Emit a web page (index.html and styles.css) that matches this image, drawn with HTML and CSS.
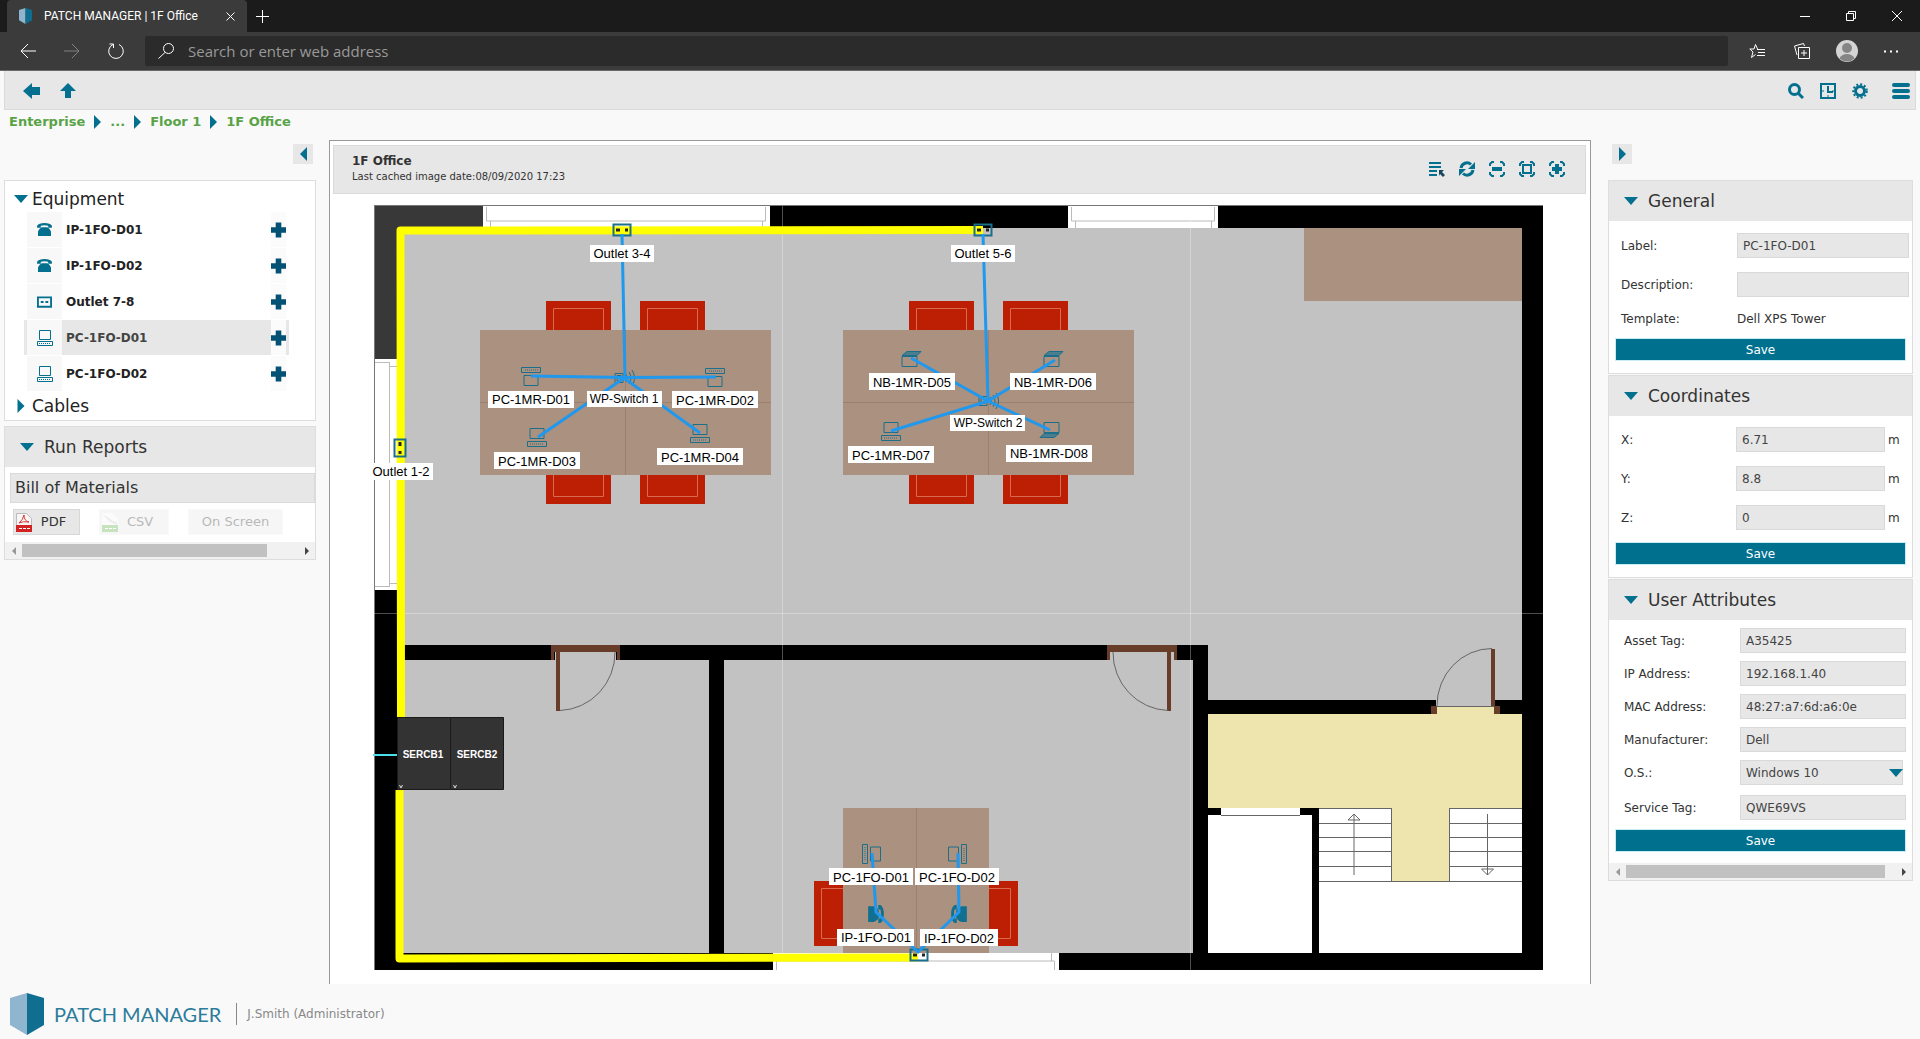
FILE: index.html
```html
<!DOCTYPE html>
<html lang="en">
<head>
    <meta charset="UTF-8">
    <title>PATCH MANAGER | 1F Office</title>
    <link rel="stylesheet" href="styles.css">
</head>
<body>
    <!-- shared icons -->
    <svg class="defs" aria-hidden="true">
        <symbol id="tri-right" viewBox="0 0 7 14"><path d="M0 0L7 7L0 14z"/></symbol>
        <symbol id="tri-left" viewBox="0 0 7 14"><path d="M7 0L0 7L7 14z"/></symbol>
        <symbol id="tri-down" viewBox="0 0 14 8"><path d="M0 0H14L7 8z"/></symbol>
        <symbol id="plus" viewBox="0 0 16 16"><path d="M5 0h6v5h5v6h-5v5H5v-5H0V5h5z"/></symbol>
        <symbol id="phone" viewBox="0 0 16 14">
            <path d="M0 5V3Q2 0 8 0t8 3v2h-4V3Q8 2 4 3v2z"/>
            <path d="M1 14V9Q3 5 5 4.500h6Q13 5 15 9v5z"/>
        </symbol>
        <symbol id="outlet" viewBox="0 0 16 12">
            <path fill-rule="evenodd" d="M0 0h16v12H0zM2 2v8h12V2z"/>
            <path d="M4 5h3v2H4zM9 5h3v2H9z"/>
        </symbol>
        <symbol id="pc" viewBox="0 0 16 16">
            <path fill="none" stroke="currentColor" d="M2.500 .5h11v9h-11zM.5 11.500h15v4H.5z"/>
            <path stroke="currentColor" stroke-dasharray="1 1" d="M2 13.500h12"/>
        </symbol>
        <symbol id="logo" viewBox="0 0 34 42">
            <path fill="#8fb5cf" d="M0 5L17 0V42L0 32z"/>
            <path fill="#106e90" d="M17 0L34 5V32L17 42z"/>
        </symbol>
    </svg>

    <div class="browser">
        <div class="tabs">
            <div class="tab">
                <svg width="13" height="16"><use href="#logo"/></svg>
                <span class="tab-title">PATCH MANAGER | 1F Office</span>
                <button class="tab-close" aria-label="Close tab"><svg width="9" height="9"><path d="M.5 .5l8 8M8.500 .5l-8 8"/></svg></button>
            </div>
            <button class="tab-new" aria-label="New tab"><svg width="13" height="13"><path d="M6.500 0v13M0 6.500h13"/></svg></button>
            <div class="window-buttons">
                <button aria-label="Minimize"><svg width="10" height="10"><path d="M0 5.500h10"/></svg></button>
                <button aria-label="Restore"><svg width="10" height="10"><path d="M.5 2.500h7v7h-7zM2.500 2.500v-2h7v7h-2"/></svg></button>
                <button aria-label="Close"><svg width="10" height="10"><path d="M0 0l10 10M10 0L0 10"/></svg></button>
            </div>
        </div>
        <div class="address-bar">
            <button aria-label="Back"><svg width="16" height="16"><path d="M8 1L1 8l7 7M1 8h15"/></svg></button>
            <button class="dim" aria-label="Forward"><svg width="16" height="16"><path d="M8 1l7 7-7 7M15 8H0"/></svg></button>
            <button aria-label="Reload"><svg width="16" height="16"><path d="M11 1.500A7.300 7.300 0 1 1 5 1.500M1.500 1h4v4"/></svg></button>
            <div class="address">
                <svg width="16" height="16"><circle cx="10.500" cy="5.500" r="5"/><path d="M7 9.500L.5 15.500"/></svg>
                <input type="text" aria-label="Address" placeholder="Search or enter web address">
            </div>
            <div class="browser-tools">
                <button aria-label="Favorites"><svg width="16" height="16"><path d="M8.500 6L6.500 1.500L5 6H.8L4 9l-1.500 5.500L6.500 11.500M8 6.500h8M9 9.500h7M8 12.500h8"/></svg></button>
                <button aria-label="Collections"><svg width="16" height="16"><path d="M4.500 4.500h11v11h-11zM10 7v6M7 10h6M3 12L.5 3l9-2.500L10.500 3"/></svg></button>
                <button aria-label="Profile"><svg width="22" height="22"><circle class="face-bg" cx="11" cy="11" r="11"/><circle class="face" cx="11" cy="8" r="5"/><path class="face" d="M3.500 18.500a8 7 0 0 1 15 0A11 11 0 0 1 3.500 18.500z"/></svg></button>
                <button aria-label="More"><svg width="15" height="3"><path class="dots" d="M0 .5h2v2H0zM6 .5h2v2H6zM12 .5h2v2h-2z"/></svg></button>
            </div>
        </div>
    </div>

    <div class="toolbar">
        <button aria-label="Back"><svg width="17" height="16"><path d="M0 8L9 0V4H17V12H9V16z"/></svg></button>
        <button aria-label="Up"><svg width="16" height="15"><path d="M8 0L16 8H11V15H5V8H0z"/></svg></button>
        <div class="toolbar-right">
            <button aria-label="Search"><svg width="16" height="16"><circle class="line3" cx="6.500" cy="6.500" r="5"/><path class="line3" d="M10 10l5 5"/></svg></button>
            <button aria-label="History"><svg width="16" height="16"><path class="line2" d="M1 1h14v14H1zM8 3v6h5"/><path class="line1" d="M2 8h2M12 8h2M8 12v2"/></svg></button>
            <button aria-label="Settings"><svg width="16" height="16"><circle class="line3" cx="8" cy="8" r="4.500"/><circle class="teeth" cx="8" cy="8" r="6.800"/></svg></button>
            <button class="menu" aria-label="Menu"><svg width="18" height="16"><rect width="18" height="4" rx="2"/><rect y="6" width="18" height="4" rx="2"/><rect y="12" width="18" height="4" rx="2"/></svg></button>
        </div>
    </div>

    <nav class="breadcrumb">
        <a href="#">Enterprise</a>
        <svg width="7" height="14"><use href="#tri-right"/></svg>
        <a href="#">...</a>
        <svg width="7" height="14"><use href="#tri-right"/></svg>
        <a href="#">Floor 1</a>
        <svg width="7" height="14"><use href="#tri-right"/></svg>
        <a href="#">1F Office</a>
    </nav>

    <main class="content">
        <aside class="left">
            <button class="collapse" aria-label="Collapse left panel"><svg width="7" height="14"><use href="#tri-left"/></svg></button>
            <section class="tree">
                <h2><svg width="14" height="8"><use href="#tri-down"/></svg>Equipment</h2>
                <ul>
                    <li><span class="type"><svg width="15" height="13"><use href="#phone"/></svg></span><a href="#">IP-1FO-D01</a><button aria-label="Add to IP-1FO-D01"><svg width="15" height="16"><use href="#plus"/></svg></button></li>
                    <li><span class="type"><svg width="15" height="13"><use href="#phone"/></svg></span><a href="#">IP-1FO-D02</a><button aria-label="Add to IP-1FO-D02"><svg width="15" height="16"><use href="#plus"/></svg></button></li>
                    <li><span class="type"><svg width="15" height="12"><use href="#outlet"/></svg></span><a href="#">Outlet 7-8</a><button aria-label="Add to Outlet 7-8"><svg width="15" height="16"><use href="#plus"/></svg></button></li>
                    <li class="active"><span class="type"><svg width="16" height="16"><use href="#pc"/></svg></span><a href="#">PC-1FO-D01</a><button aria-label="Add to PC-1FO-D01"><svg width="15" height="16"><use href="#plus"/></svg></button></li>
                    <li><span class="type"><svg width="16" height="16"><use href="#pc"/></svg></span><a href="#">PC-1FO-D02</a><button aria-label="Add to PC-1FO-D02"><svg width="15" height="16"><use href="#plus"/></svg></button></li>
                </ul>
                <h2><svg width="14" height="14"><use href="#tri-right"/></svg>Cables</h2>
            </section>
            <section class="panel">
                <h2><svg width="14" height="8"><use href="#tri-down"/></svg>Run Reports</h2>
                <div class="reports">
                    <h3>Bill of Materials</h3>
                    <div class="report-buttons">
                        <button class="pdf">
                            <svg width="16" height="19"><path fill="#f6f6f6" stroke="#bbb" d="M.5 .5h10l5 5v13H.5z"/><path fill="none" stroke="#d33" d="M3 10q4-3 5-8 0 6 5 7-6-1-10 1"/><path fill="#d22222" d="M0 12h16v7H0z"/><path stroke="#fff" stroke-dasharray="3 1" d="M3 15.500h11"/></svg>
                            PDF
                        </button>
                        <button class="csv" disabled>
                            <svg width="16" height="19"><path fill="#f6f6f6" d="M0 0h10l6 6v13H0z"/><path fill="#ccc" d="M1 2l6 3 4 3 4 1v3L8 9z"/><path fill="#5fae4a" d="M0 12h16v7H0z"/><path stroke="#fff" stroke-dasharray="3 1" d="M3 15.500h11"/></svg>
                            CSV
                        </button>
                        <button class="screen" disabled>On Screen</button>
                    </div>
                </div>
                <div class="scrollbar"><button class="prev" aria-label="Scroll left"></button><div class="thumb"></div><button class="next" aria-label="Scroll right"></button></div>
            </section>
        </aside>

        <section class="plan">
            <header>
                <div>
                    <h1>1F Office</h1>
                    <p>Last cached image date:08/09/2020 17:23</p>
                </div>
                <div class="plan-tools">
                    <button aria-label="Select"><svg width="16" height="16"><path class="line2" d="M0 2h12M0 6h12M0 10h8M0 14h8"/><path class="dark" d="M10 9h5l-2 2 3 3-2 2-3-3-1 2z"/></svg></button>
                    <button aria-label="Refresh"><svg width="16" height="16"><path class="line3" d="M2 7a6 6 0 0 1 10-3.500M14 9a6 6 0 0 1-10 3.500"/><path d="M16 1v7H9zM0 15V8h7z"/></svg></button>
                    <button aria-label="Zoom out"><svg width="16" height="16"><path class="line2" d="M1 5V3l2-2h2M11 1h2l2 2v2M15 11v2l-2 2h-2M5 15H3l-2-2v-2"/><path d="M3 6h10v4H3z"/></svg></button>
                    <button aria-label="Fit"><svg width="16" height="16"><path class="line2" d="M1 5V3l2-2h2M11 1h2l2 2v2M15 11v2l-2 2h-2M5 15H3l-2-2v-2M4 4h8v8H4z"/></svg></button>
                    <button aria-label="Zoom in"><svg width="16" height="16"><path class="line2" d="M1 5V3l2-2h2M11 1h2l2 2v2M15 11v2l-2 2h-2M5 15H3l-2-2v-2"/><path d="M6 3h4v3h3v4h-3v3H6v-3H3V6h3z"/></svg></button>
                </div>
            </header>

            <svg class="floor" viewBox="330 194 1260 790" role="img" aria-label="Floor plan of 1F Office">
                <defs>
                    <g id="m-pc">
                        <path d="M-7-9.500h14v10h-14zM-9.500 3.500h19v5h-19z"/>
                        <path stroke-dasharray="1 1" d="M-7 6h14"/>
                    </g>
                    <g id="m-nb">
                        <path d="M-8-3.500h15v10h-15z"/>
                        <path fill="#4b7f8f" d="M-8-4.500l5-4H11l-4 4z"/>
                    </g>
                    <g id="m-outlet">
                        <path stroke-width="2" d="M-8.500-5.500h17v11h-17z"/>
                        <path stroke="#222" stroke-width="3" d="M-6 0h4M3 0h3"/>
                    </g>
                    <g id="m-switch">
                        <path d="M-4-4.500h8v9h-8zM-2-2.500h4v5h-4z"/>
                        <path d="M7-4q3 4 0 8M10-6q4 6 0 12M13-8q5 8 0 16"/>
                    </g>
                    <g id="chair-up">
                        <path fill="#bd1f04" d="M0 0h65v29H0z"/>
                        <path fill="none" stroke="#d9694f" d="M7.500 29V7.500h50V29"/>
                    </g>
                    <g id="desk4">
                        <use href="#chair-up" x="66" y="-29"/>
                        <use href="#chair-up" x="160" y="-29"/>
                        <use href="#chair-up" transform="translate(131 174) rotate(180)"/>
                        <use href="#chair-up" transform="translate(225 174) rotate(180)"/>
                        <path fill="#aa9180" d="M0 0h291v145H0z"/>
                        <path stroke="#99806f" d="M0 72.500h291M145.500 0v145"/>
                    </g>
                </defs>

                <!-- walls and rooms -->
                <path d="M374 206h1169v764H374z"/>
                <path fill="#c2c2c2" d="M402 228h1120v472h-314v-55H402zM402 660h307v293H402zM724 660h469v293H724z"/>
                <path fill="#383838" d="M374 206h109v22h-86v131h-23z"/>
                <path fill="#fff" d="M483 206h287v22H483zM1068 206h150v22h-150zM374 359h23v231h-23zM773 953h286v17H773z"/>
                <path class="thin" d="M486.500 207v14h279v-14M490.500 221v7M762.500 221v7M1071.500 207v14h143v-14M1075.500 221v7M1211.500 221v7M389.500 362v225M374 362.500h15M389 366.500h8M374 586.500h15M389 583.500h8M776.500 970v-9h278v9M1051.500 953v8"/>
                <path fill="none" stroke="#777" d="M374.500 970V206M374 205.500h1169"/>

                <path fill="#eee5ae" d="M1208 714h229v-8h57v8h28v94h-73v73h-57v-73h-184z"/>
                <path fill="#fff" d="M1221 808h79v7h12v138h-104V815h13zM1319 808h73v73h57v-73h73v145h-203z"/>
                <path class="step" d="M1221 815.500h79M1319 808.500h73M1449 808.500h73M1319 823.500h73M1449 823.500h73M1319 837.500h73M1449 837.500h73M1319 851.500h73M1449 851.500h73M1319 866.500h73M1449 866.500h73M1319 881.500h203M1391.500 808v73M1449.500 808v73"/>
                <path class="step" d="M1354 875v-61l6 6h-12l6-6M1487.500 814v61l-6-6h12l-6 6"/>

                <!-- doors -->
                <path fill="#c2c2c2" d="M555 652h61v8h-61zM1110 652h64v8h-64zM1436 699h59v7h-59z"/>
                <path fill="#673c28" d="M551 645h69v15h-3v-8h-57v59h-4v-59h-2v8h-3zM1107 645h70v15h-3v-8h-3v59h-4v-59h-57v8h-3zM1431 706h6v8h-6zM1494 706h6v8h-6zM1491 649h4v57h-4z"/>
                <path class="arc" d="M615 652a57 58 0 0 1-55 58.500M1113 652a57 58 0 0 0 55 58.500M1437 706a55 57 0 0 1 55-57.500M1437 706.500h57"/>

                <!-- furniture -->
                <use href="#desk4" x="480" y="330"/>
                <use href="#desk4" x="843" y="330"/>
                <path fill="#aa9180" d="M1304 228h218v73h-218zM843 808h146v145H843z"/>
                <path stroke="#99806f" d="M916.500 808v145"/>
                <use href="#chair-up" transform="translate(814 946) rotate(-90)"/>
                <use href="#chair-up" transform="translate(1018 881) rotate(90)"/>

                <!-- sheet joins -->
                <path stroke="#fff" stroke-opacity=".3" d="M782.500 206v764M1190.500 206v764M374 613.500h1169"/>

                <!-- trunking and racks -->
                <path class="trunk" d="M983 230L400.500 230.500L401 717M399.500 790V958.500L918 957.500"/>
                <path stroke="#4ddfe9" stroke-width="2" d="M373 755h24"/>
                <path fill="#333" stroke="#1a1a1a" d="M397.500 717.500h53v72h-53zM450.500 717.500h53v72h-53z"/>
                <g class="rack">
                    <text x="423" y="758">SERCB1</text>
                    <text x="477" y="758">SERCB2</text>
                </g>
                <path fill="none" stroke="#ddd" d="M399.500 785l1.500 3 1.500-3M453.500 785l1.500 3 1.500-3"/>

                <!-- device symbols -->
                <g class="device">
                    <use href="#m-pc" transform="translate(531 376) rotate(180)"/>
                    <use href="#m-pc" transform="translate(715 377) rotate(180)"/>
                    <use href="#m-pc" x="537" y="438"/>
                    <use href="#m-pc" x="700" y="434"/>
                    <use href="#m-pc" x="891" y="432"/>
                    <use href="#m-pc" transform="translate(871 854) rotate(90)"/>
                    <use href="#m-pc" transform="translate(958 854) rotate(-90)"/>
                    <use href="#m-nb" x="910" y="360"/>
                    <use href="#m-nb" x="1052" y="360"/>
                    <use href="#m-nb" transform="translate(1051 429) rotate(180)"/>
                    <use href="#m-switch" x="619" y="378"/>
                    <use href="#m-switch" x="983" y="401"/>
                    <use href="#m-outlet" x="622" y="230"/>
                    <use href="#m-outlet" x="983" y="230"/>
                    <use href="#m-outlet" x="919" y="955"/>
                    <use href="#m-outlet" transform="translate(400 448) rotate(90)"/>
                </g>
                <g fill="#11708f">
                    <use href="#phone" width="18" height="16" transform="translate(884 905) rotate(90)"/>
                    <use href="#phone" width="18" height="16" transform="translate(951 923) rotate(-90)"/>
                </g>

                <!-- patch cables -->
                <path class="cable" d="M622 234L625 376M531 376L624 377.500L716 377M538 437L624 378L700 433M983 234L988 401M911 358L988 401L1055 360M891 431L988 401L1050 430M872 853L876 912L918 952L959 912L958 853"/>

                <g class="label">
                    <rect x="590" y="245" width="64" height="17"/><text x="622" y="258">Outlet 3-4</text>
                    <rect x="951" y="245" width="64" height="17"/><text x="983" y="258">Outlet 5-6</text>
                    <rect x="370" y="463" width="63" height="17"/><text x="401" y="476">Outlet 1-2</text>
                    <rect x="488" y="391" width="86" height="17"/><text x="531" y="404">PC-1MR-D01</text>
                    <rect x="672" y="391" width="86" height="17"/><text x="715" y="405">PC-1MR-D02</text>
                    <rect x="494" y="452" width="86" height="17"/><text x="537" y="466">PC-1MR-D03</text>
                    <rect x="657" y="448" width="86" height="17"/><text x="700" y="462">PC-1MR-D04</text>
                    <rect x="869" y="373" width="86" height="17"/><text x="912" y="387">NB-1MR-D05</text>
                    <rect x="1010" y="373" width="86" height="17"/><text x="1053" y="387">NB-1MR-D06</text>
                    <rect x="848" y="446" width="86" height="17"/><text x="891" y="460">PC-1MR-D07</text>
                    <rect x="1006" y="445" width="86" height="17"/><text x="1049" y="458">NB-1MR-D08</text>
                    <rect x="829" y="868" width="84" height="17"/><text x="871" y="882">PC-1FO-D01</text>
                    <rect x="915" y="868" width="84" height="17"/><text x="957" y="882">PC-1FO-D02</text>
                    <rect x="837" y="929" width="77" height="17"/><text x="876" y="942">IP-1FO-D01</text>
                    <rect x="920" y="929" width="78" height="17"/><text x="959" y="943">IP-1FO-D02</text>
                    <g class="small">
                        <rect x="587" y="391" width="75" height="16"/><text x="624" y="403">WP-Switch 1</text>
                        <rect x="950" y="415" width="75" height="16"/><text x="988" y="427">WP-Switch 2</text>
                    </g>
                </g>
            </svg>
        </section>

        <aside class="right">
            <button class="collapse" aria-label="Collapse right panel"><svg width="7" height="14"><use href="#tri-right"/></svg></button>
            <form class="panel">
                <h2><svg width="14" height="8"><use href="#tri-down"/></svg>General</h2>
                <div class="fields general">
                    <div class="field"><label for="label">Label:</label><input id="label" type="text" value="PC-1FO-D01"></div>
                    <div class="field"><label for="description">Description:</label><input id="description" type="text"></div>
                    <div class="field text"><span>Template:</span><span>Dell XPS Tower</span></div>
                    <button class="save" type="button">Save</button>
                </div>
            </form>
            <form class="panel">
                <h2><svg width="14" height="8"><use href="#tri-down"/></svg>Coordinates</h2>
                <div class="fields coords">
                    <div class="field"><label for="x">X:</label><input id="x" type="text" value="6.71"><span>m</span></div>
                    <div class="field"><label for="y">Y:</label><input id="y" type="text" value="8.8"><span>m</span></div>
                    <div class="field"><label for="z">Z:</label><input id="z" type="text" value="0"><span>m</span></div>
                    <button class="save" type="button">Save</button>
                </div>
            </form>
            <form class="panel">
                <h2><svg width="14" height="8"><use href="#tri-down"/></svg>User Attributes</h2>
                <div class="fields attributes">
                    <div class="field"><label for="asset">Asset Tag:</label><input id="asset" type="text" value="A35425"></div>
                    <div class="field"><label for="ip">IP Address:</label><input id="ip" type="text" value="192.168.1.40"></div>
                    <div class="field"><label for="mac">MAC Address:</label><input id="mac" type="text" value="48:27:a7:6d:a6:0e"></div>
                    <div class="field"><label for="maker">Manufacturer:</label><input id="maker" type="text" value="Dell"></div>
                    <div class="field os"><label for="os">O.S.:</label><div class="select"><select id="os"><option>Windows 10</option></select><svg width="14" height="8"><use href="#tri-down"/></svg></div></div>
                    <div class="field"><label for="service">Service Tag:</label><input id="service" type="text" value="QWE69VS"></div>
                    <button class="save" type="button">Save</button>
                </div>
                <div class="scrollbar"><button type="button" class="prev" aria-label="Scroll left"></button><div class="thumb"></div><button type="button" class="next" aria-label="Scroll right"></button></div>
            </form>
        </aside>
    </main>

    <footer class="footer">
        <svg width="34" height="42"><use href="#logo"/></svg>
        <span class="brand">PATCH MANAGER</span>
        <span class="user">J.Smith (Administrator)</span>
    </footer>
</body>
</html>
```

FILE: styles.css
```css
* {
    box-sizing: border-box;
}

body,
h1,
h2,
h3,
p,
ul,
li {
    margin: 0;
    padding: 0;
    font-weight: normal;
}

body {
    background: #f9f9f9;
    color: #333;
    font: 12px/16px "DejaVu Sans", Verdana, sans-serif;
}

button,
input,
select {
    margin: 0;
    padding: 0;
    border: 0;
    background: none;
    color: inherit;
    font: inherit;
}

button {
    display: flex;
    align-items: center;
    justify-content: center;
}

svg {
    display: block;
    flex: none;
    fill: #04708f;
    color: #04708f;
}

a {
    text-decoration: none;
}

.defs {
    position: absolute;
    width: 0;
    height: 0;
}

.line1,
.line2,
.line3 {
    fill: none;
    stroke: #04708f;
    stroke-width: 1;
}

.line2 {
    stroke-width: 2;
}

.line3 {
    stroke-width: 3;
}

.teeth {
    fill: none;
    stroke: #04708f;
    stroke-width: 2;
    stroke-dasharray: 2 2;
}

.dark {
    fill: #17475c;
}

/* browser frame */
.browser {
    background: #3b3b3b;
    color: #fff;
    font-family: "Open Sans", "Noto Sans", sans-serif;
    border-bottom: 1px solid #6a6a6a;
}

.browser button svg,
.address svg {
    fill: none;
    stroke: #fff;
}

.tabs {
    display: flex;
    align-items: center;
    height: 32px;
    padding-left: 7px;
    background: #1b1b1b;
}

.tab {
    display: flex;
    align-items: center;
    width: 240px;
    height: 32px;
    padding: 0 12px;
    background: #3b3b3b;
    border-radius: 4px 4px 0 0;
}

.tab-title {
    flex: 1;
    margin-left: 12px;
    font-family: Roboto, sans-serif;
    white-space: nowrap;
}

.tab-new {
    width: 30px;
    height: 32px;
}

.window-buttons {
    display: flex;
    margin-left: auto;
}

.window-buttons button {
    width: 46px;
    height: 28px;
}

.address-bar {
    display: flex;
    align-items: center;
    height: 38px;
    padding-left: 6px;
}

.address-bar > button {
    width: 44px;
}

.address-bar > button.dim svg {
    stroke: #808080;
}

.address {
    flex: 1;
    display: flex;
    align-items: center;
    height: 30px;
    margin-left: 7px;
    padding-left: 13px;
    background: #2b2b2b;
    border-radius: 2px;
}

.address input {
    flex: 1;
    margin-left: 14px;
    font-size: 15px;
    outline: none;
}

.address input::placeholder {
    color: #999;
    opacity: 1;
}

.browser-tools {
    display: flex;
    padding: 0 6px;
}

.browser-tools button {
    width: 45px;
    height: 30px;
}

.browser .face-bg {
    fill: #d4d4d4;
    stroke: none;
}

.browser .face {
    fill: #858585;
    stroke: none;
}

.browser .dots {
    fill: #fff;
    stroke: none;
}

/* application bar */
.toolbar {
    display: flex;
    align-items: center;
    gap: 20px;
    height: 39px;
    margin: 0 4px;
    padding: 1px 5px 0 18px;
    background: #e7e7e7;
    border: 1px solid #dadada;
    border-top: 0;
}

.toolbar-right {
    display: flex;
    gap: 16px;
    margin-left: auto;
}

.toolbar-right .menu {
    margin-left: 8px;
}

.breadcrumb {
    display: flex;
    align-items: center;
    gap: 9px;
    height: 30px;
    padding: 0 9px 6px;
    font-weight: bold;
    font-size: 13px;
}

.breadcrumb a {
    color: #58a345;
}

.content {
    display: flex;
    align-items: flex-start;
    padding: 0 7px 0 4px;
}

.left {
    flex: none;
    width: 312px;
    padding-top: 4px;
}

.right {
    flex: none;
    width: 305px;
    padding-top: 4px;
}

.collapse {
    width: 20px;
    height: 20px;
    margin-bottom: 16px;
    background: #e7e7e7;
}

.left .collapse {
    margin-left: 289px;
}

.right .collapse {
    margin-left: 4px;
}

/* equipment tree */
.tree {
    margin-bottom: 5px;
    padding: 4px 0 1px;
    background: #fff;
    border: 1px solid #ddd;
}

.tree h2 {
    display: flex;
    align-items: center;
    gap: 4px;
    height: 27px;
    padding-left: 9px;
    color: #222;
    font-size: 17px;
}

.tree ul {
    padding: 0 26px 0 19px;
    list-style: none;
}

.tree li {
    display: flex;
    align-items: center;
    height: 36px;
    padding-right: 3px;
    border-bottom: 1px solid #fff;
}

.tree li.active {
    background: #e7e7e7;
}

.tree .type {
    display: flex;
    align-items: center;
    justify-content: center;
    width: 35px;
    height: 35px;
    margin-left: 3px;
    background: #f8f8f8;
}

.tree li a {
    flex: 1;
    margin-left: 4px;
    color: #222;
    font-weight: bold;
}

.tree li.active a {
    color: #444;
}

.tree li button {
    height: 35px;
    background: #fbfbfb;
}

.tree li button svg {
    fill: #035273;
}

/* grey headed panels */
.panel {
    margin-bottom: 1px;
    background: #fff;
    border: 1px solid #ddd;
}

.panel h2 {
    display: flex;
    align-items: center;
    gap: 10px;
    height: 40px;
    padding-left: 15px;
    background: #e7e7e7;
    font-size: 17px;
}

.reports {
    padding: 6px 0 7px 5px;
}

.reports h3 {
    height: 30px;
    padding-left: 4px;
    background: #e7e7e7;
    border: 1px solid #dadada;
    font-size: 16px;
    line-height: 28px;
}

.report-buttons {
    display: flex;
    gap: 19px;
    padding: 6px 0 0 3px;
}

.report-buttons button {
    gap: 9px;
    height: 26px;
    background: #e7e7e7;
    border: 1px solid #d8d8d8;
    font-size: 13px;
}

.report-buttons .pdf {
    width: 67px;
    padding-right: 11px;
}

.report-buttons .csv {
    width: 70px;
    padding-right: 13px;
}

.report-buttons .screen {
    width: 95px;
}

.report-buttons button:disabled {
    opacity: .35;
    border-color: #eee;
}

.scrollbar {
    display: flex;
    align-items: center;
    height: 17px;
    background: #f1f1f1;
}

.scrollbar button {
    flex: none;
    width: 17px;
    height: 17px;
}

.scrollbar button::before {
    content: "";
    border: 4px solid transparent;
}

.scrollbar .prev::before {
    border-left: 0;
    border-right-color: #999;
}

.scrollbar .next::before {
    border-right: 0;
    border-left-color: #444;
}

.scrollbar .thumb {
    flex: 1;
    height: 13px;
    margin-right: 31px;
    background: #c1c1c1;
}

.right .scrollbar .thumb {
    margin-right: 10px;
}

/* floor plan */
.plan {
    flex: 1;
    margin: 0 17px 0 13px;
    background: #fff;
    border: 1px solid #999;
    border-bottom: 0;
}

.plan header {
    display: flex;
    align-items: center;
    justify-content: space-between;
    height: 49px;
    margin: 4px 4px 0 3px;
    padding: 0 20px 1px 18px;
    background: #e7e7e7;
    border: 1px solid #dadada;
}

.plan h1 {
    font-size: 12px;
    font-weight: bold;
}

.plan p {
    font-size: 10px;
}

.plan-tools {
    display: flex;
    gap: 14px;
}

.floor {
    width: 100%;
    height: auto;
    fill: #000;
}

.floor .thin {
    fill: none;
    stroke: #bbb;
}

.floor .step,
.floor .arc {
    fill: none;
    stroke: #666;
}

.floor .trunk {
    fill: none;
    stroke: #ff0;
    stroke-width: 8;
    stroke-linejoin: round;
}

.floor .device {
    fill: none;
    stroke: #1b6f8a;
}

.floor .cable {
    fill: none;
    stroke: #1f98ee;
    stroke-width: 3;
}

.floor text {
    font-family: "Liberation Sans", Arial, sans-serif;
    font-size: 13px;
    text-anchor: middle;
}

.floor .label rect {
    fill: #fff;
}

.floor .small text {
    font-size: 12px;
}

.floor .rack text {
    fill: #fff;
    font-size: 10px;
    font-weight: bold;
}

/* property forms */
.fields {
    display: flex;
    flex-direction: column;
    padding: 12px 6px;
}

.field {
    display: flex;
    align-items: center;
}

.field input,
.field select {
    flex: 1;
    min-width: 0;
    width: 100%;
    height: 25px;
    padding: 0 5px;
    background: #e7e7e7;
    border: 1px solid #d9d9d9;
    color: #444;
}

.general,
.coords {
    gap: 14px;
}

.coords {
    padding-top: 11px;
}

.general label,
.general .text span:first-child,
.coords label {
    width: 116px;
    margin-left: 6px;
}

.general .field {
    margin-right: -3px;
}

.coords .field {
    gap: 3px;
}

.coords label {
    width: 112px;
}

.coords .field span {
    width: 18px;
}

.save {
    height: 23px;
    background: #00708f;
    border: 1px solid #c8edf5;
    color: #fff;
}

.general .save {
    margin-top: -3px;
}

.coords .save {
    margin-top: -2px;
}

.attributes {
    gap: 8px;
    padding: 8px 6px 11px;
}

.attributes label {
    width: 116px;
    margin-left: 9px;
}

.attributes .save {
    margin-top: 1px;
}

.attributes .os {
    margin: 0 3px 2px 0;
}

.select {
    position: relative;
    flex: 1;
}

.select select {
    display: block;
    appearance: none;
}

.select svg {
    position: absolute;
    top: 9px;
    right: 0;
    pointer-events: none;
}

/* footer */
.footer {
    display: flex;
    align-items: center;
    padding: 9px 10px 4px;
}

.brand {
    margin-left: 10px;
    color: #2c7c9c;
    font: 20px/24px Lato, sans-serif;
}

.user {
    margin-left: 15px;
    padding: 3px 0 3px 10px;
    border-left: 1px solid #888;
    color: #888;
}
```
